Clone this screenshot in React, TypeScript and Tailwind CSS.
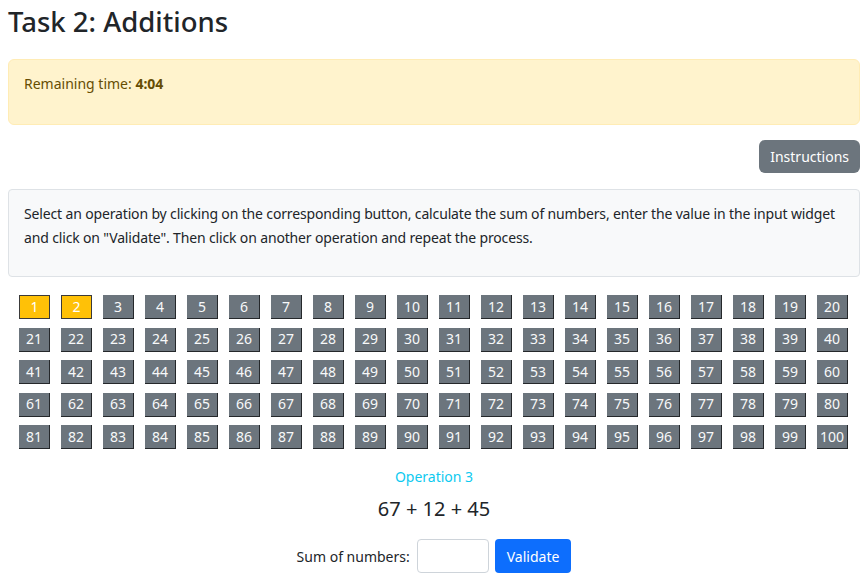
const font = { fontFamily: '"Noto Sans", "Open Sans", sans-serif' }

const selected = [1, 2]

function OpButton({ n }: { n: number }) {
  const active = selected.includes(n)
  return (
    <button
      className={
        active
          ? 'w-[31px] h-[24px] bg-[#ffc107] text-white text-[14px] leading-none border border-[#3a3a3a] flex items-center justify-center'
          : 'w-[31px] h-[24px] bg-[#6c757d] text-[#f8f9fa] text-[14px] leading-none border-r border-b border-[#25282b] flex items-center justify-center'
      }
    >
      {n}
    </button>
  )
}

export default function App() {
  const ops = Array.from({ length: 100 }, (_, i) => i + 1)
  return (
    <div className="w-[868px] h-[583px] bg-white text-[#212529] px-2 overflow-hidden" style={font}>
      <h2 className="text-[27.5px] leading-[35px] font-medium pt-[4px] mb-[20px]">Task 2: Additions</h2>

      <div className="h-[66px] bg-[#fff3cd] border border-[#ffecb5] rounded-[6px] text-[#664d03] text-[14px] px-[15px] pt-[13px]">
        Remaining time: <b>4:04</b>
      </div>

      <div className="flex justify-end mt-[15px]">
        <button className="h-[33px] px-[11px] bg-[#6c757d] text-white rounded-[6px] text-[14px]">
          Instructions
        </button>
      </div>

      <div className="mt-[16px] h-[88px] bg-[#f8f9fa] border border-[#dee2e6] rounded-[4px] pl-[15px] pr-[10px] pt-[12px] text-[14px] leading-[24px] tracking-[-0.15px]">
        Select an operation by clicking on the corresponding button, calculate the sum of numbers, enter the value in the input widget and click on "Validate". Then click on another operation and repeat the process.
      </div>

      <div className="mt-[18px] px-[11px] flex flex-wrap gap-x-[11px] gap-y-[8.6px]">
        {ops.map((n) => (
          <OpButton key={n} n={n} />
        ))}
      </div>

      <div className="mt-[18px] text-center text-[#0dcaf0] text-[14px] leading-[20px]">Operation 3</div>
      <div className="mt-[10px] text-center text-[20px] leading-[24px]">67 + 12 + 45</div>

      <div className="mt-[18px] flex items-center justify-center gap-[6px]">
        <span className="text-[14px] mr-[1px]">Sum of numbers:</span>
        <input className="w-[72px] h-[34px] border border-[#ced4da] rounded-[4px] bg-white px-2" />
        <button className="h-[34px] px-[12px] bg-[#0d6efd] text-white rounded-[4px] text-[14px]">Validate</button>
      </div>
    </div>
  )
}
